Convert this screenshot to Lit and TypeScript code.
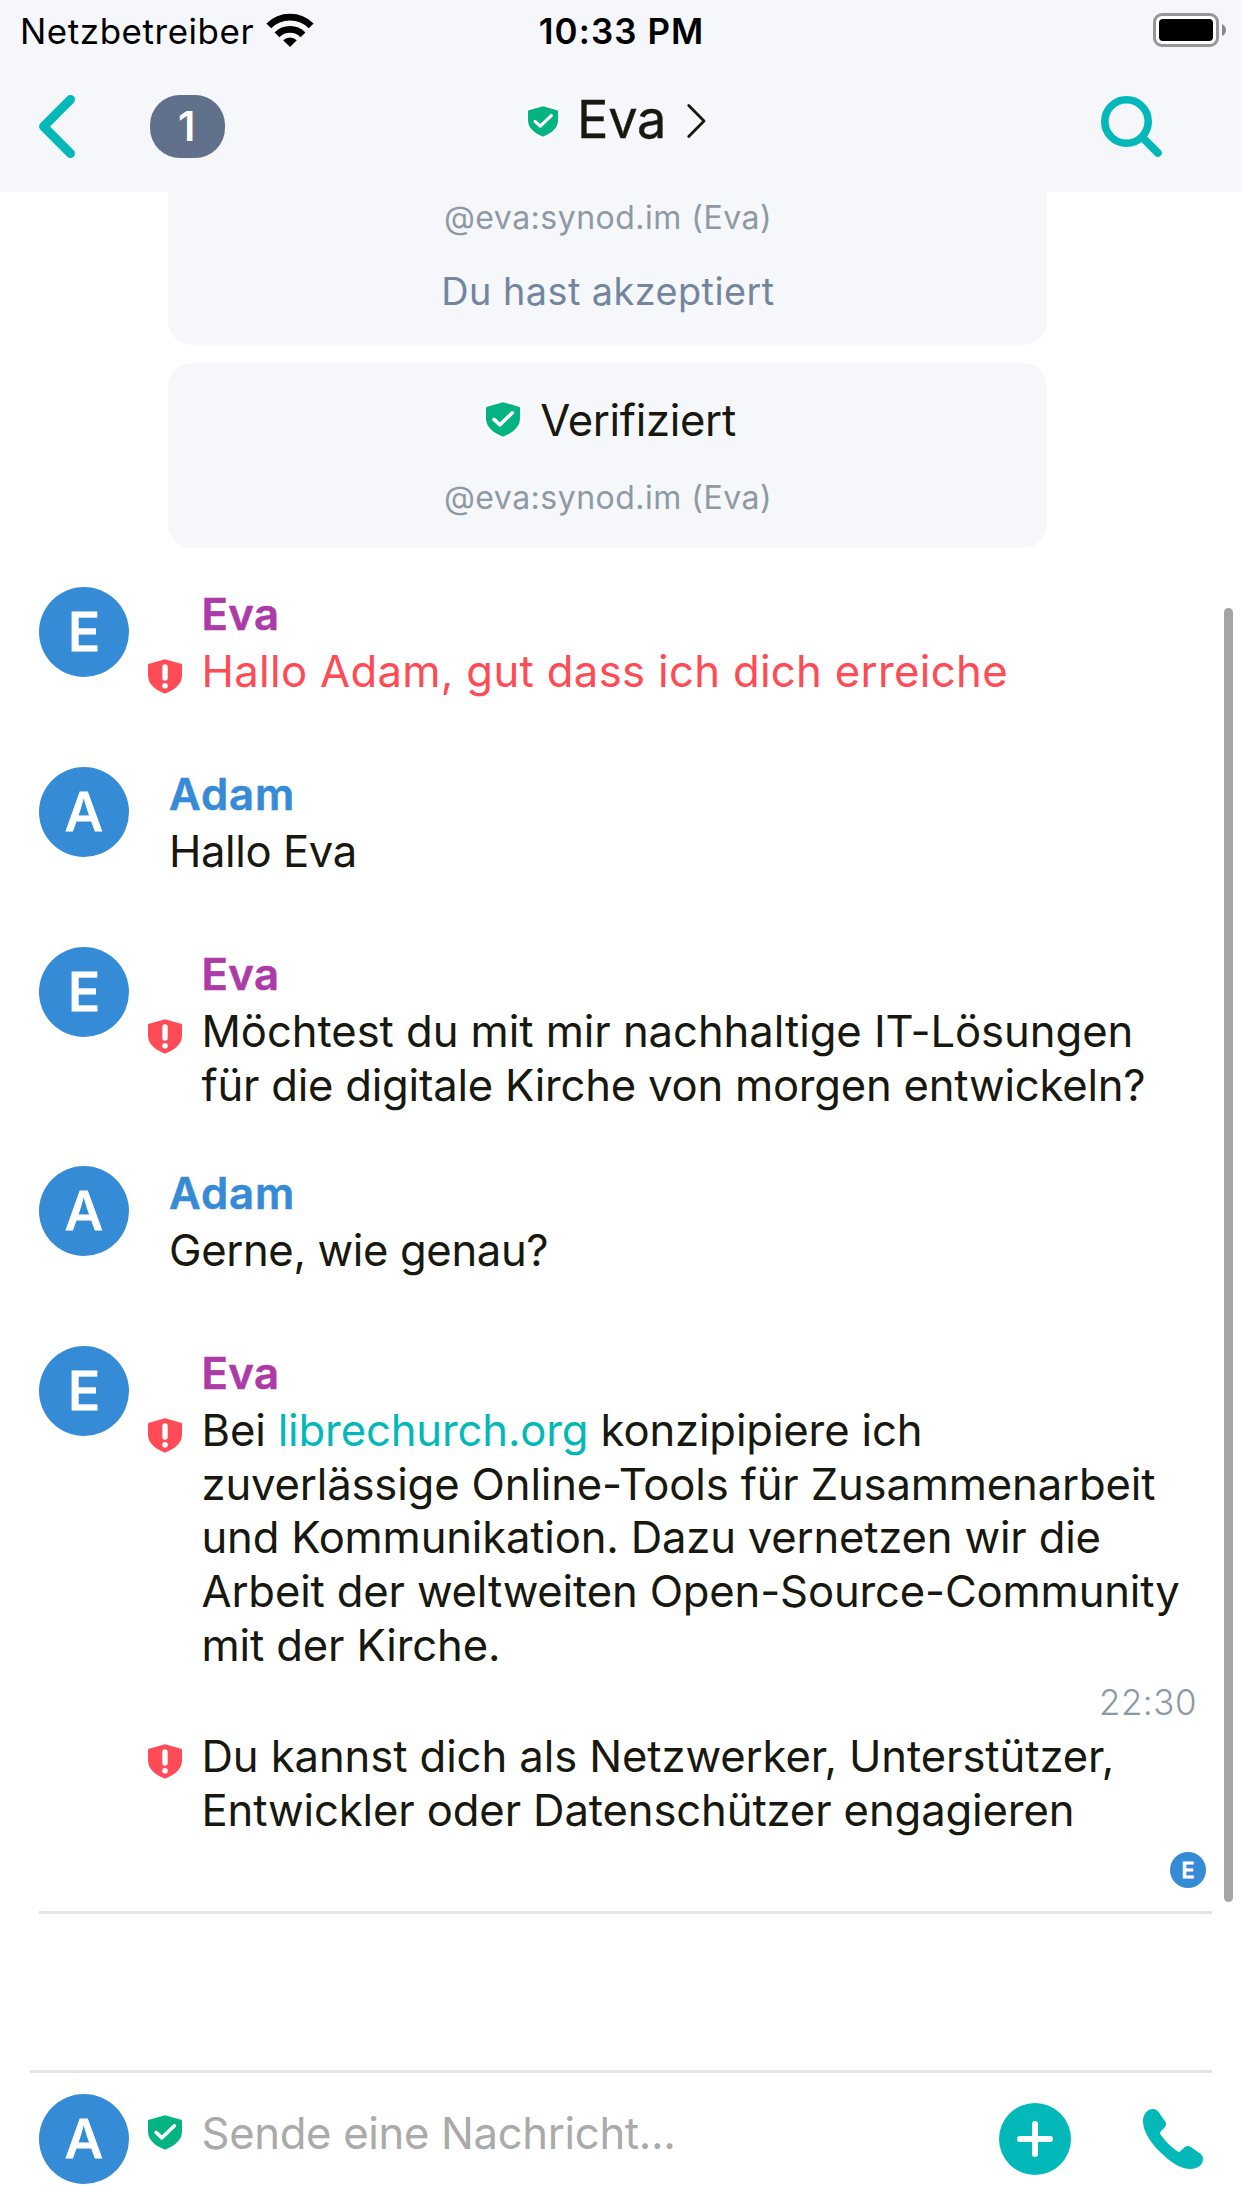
import { LitElement, html, css, svg, nothing } from "lit";
import { customElement, property } from "lit/decorators.js";

interface Line {
  text: string;
  track: number;
  link?: string;
  after?: string;
}
interface Message {
  sender: "Eva" | "Adam";
  lines: Line[];
  height: number;
  error?: boolean;
}

const messages: Message[] = [
  { sender: "Eva", height: 180, error: true, lines: [{ text: "Hallo Adam, gut dass ich dich erreiche", track: 0.35 }] },
  { sender: "Adam", height: 180, lines: [{ text: "Hallo Eva", track: -0.4 }] },
  {
    sender: "Eva",
    height: 219,
    lines: [
      { text: "Möchtest du mit mir nachhaltige IT-Lösungen", track: -0.05 },
      { text: "für die digitale Kirche von morgen entwickeln?", track: -0.22 },
    ],
  },
  { sender: "Adam", height: 180, lines: [{ text: "Gerne, wie genau?", track: -0.36 }] },
  {
    sender: "Eva",
    height: 327,
    lines: [
      { text: "Bei ", link: "librechurch.org", after: " konzipipiere ich", track: -0.14 },
      { text: "zuverlässige Online-Tools für Zusammenarbeit", track: -0.15 },
      { text: "und Kommunikation. Dazu vernetzen wir die", track: -0.18 },
      { text: "Arbeit der weltweiten Open-Source-Community", track: -0.16 },
      { text: "mit der Kirche.", track: -0.13 },
    ],
  },
];

const followUp: Line[] = [
  { text: "Du kannst dich als Netzwerker, Unterstützer,", track: -0.09 },
  { text: "Entwickler oder Datenschützer engagieren", track: -0.12 },
];

@customElement("shield-icon")
class ShieldIcon extends LitElement {
  @property() kind: "ok" | "warn" = "ok";
  static styles = css`
    :host { display: block; flex: none; width: 34px; height: 34.5px; }
    svg { display: block; width: 100%; height: 100%; overflow: visible; }
    .rim { fill: none; stroke: #fff; stroke-width: 5; stroke-linejoin: round; }
    .ok { fill: #03b381; }
    .warn { fill: #ff4b55; }
    .check { fill: none; stroke: #fff; stroke-width: 3.6; stroke-linecap: round; stroke-linejoin: round; }
    .mark { fill: #fff; }
  `;
  render() {
    const body = "M17 0.2 L33 4.7 Q34 5 34 6 V16.5 C34 25 26.5 31 18 34.2 Q17 34.6 16 34.2 C7.5 31 0 25 0 16.5 V6 Q0 5 1 4.7 Z";
    return html`<svg viewBox="0 0 34 34.5">
      <path class="rim" d=${body} />
      <path class=${this.kind} d=${body} />
      ${this.kind === "ok"
        ? svg`<path class="check" d="M8 17.4 L13.9 22.8 L26.4 10.8" />`
        : svg`<rect class="mark" x="14.3" y="5.3" width="5.4" height="16.4" rx="2.7" /><circle class="mark" cx="17" cy="26.8" r="2.8" />`}
    </svg>`;
  }
}

@customElement("user-avatar")
class UserAvatar extends LitElement {
  @property() letter = "";
  static styles = css`
    :host {
      display: flex; flex: none; align-items: center; justify-content: center;
      width: 90px; height: 90px; border-radius: 50%;
      background: #368bd6; color: #fff;
      font: 500 54px/90px Inter, sans-serif;
      -webkit-text-stroke: 0.9px #fff;
    }
  `;
  render() {
    return html`${this.letter}`;
  }
}

@customElement("app-root")
class AppRoot extends LitElement {
  static styles = css`
    :host {
      display: flex; flex-direction: column; position: relative;
      width: 1242px; height: 2208px; overflow: hidden;
      background: #fff; color: #17180f;
      font-family: Inter, "Liberation Sans", sans-serif;
      white-space: nowrap;
    }
    svg { display: block; flex: none; overflow: visible; }
    .top { flex: none; height: 192px; background: #f5f7fb; }
    .status {
      display: grid; grid-template-columns: 1fr auto 1fr; align-items: center;
      height: 60px; padding: 0 16px 0 20px; color: #000;
      font-size: 34.9px; line-height: 42px;
    }
    .carrier { display: flex; align-items: center; gap: 13px; }
    .carrier .label { letter-spacing: 0.58px; padding-top: 1px; }
    .clock { font-weight: 600; letter-spacing: 1.1px; padding-top: 1px; margin-right: 3px; }
    .battery { justify-self: end; }
    .nav { display: flex; align-items: center; height: 132px; padding: 0 0 0 38px; box-sizing: border-box; }
    .badge {
      width: 75px; height: 63px; margin-left: 75px; border-radius: 30px;
      box-sizing: border-box; padding-right: 1.5px;
      background: #61708b; color: #fff; text-align: center;
      font-weight: 600; font-size: 41px; line-height: 63px;
    }
    .title { display: flex; align-items: center; width: 573px; margin-left: 303px; padding-bottom: 10px; }
    .title shield-icon { width: 30px; height: 30.5px; }
    .title .name { font-size: 52.3px; line-height: 64px; letter-spacing: -0.28px; margin: 0 21px 5px 19px; -webkit-text-stroke: 0.4px #17180f; }
    .timeline { flex: 1; min-height: 0; overflow: hidden; }
    .card {
      display: flex; flex-direction: column; align-items: center;
      width: 879px; box-sizing: border-box; margin: 0 0 18px 168px;
      padding: 31px 0 0 1px; border-radius: 24px; background: #f5f7fb;
    }
    .card.cut { height: 153px; padding-top: 6px; border-radius: 0 0 24px 24px; }
    .card.done { height: 185px; margin-bottom: 39px; }
    .user { font-size: 32px; line-height: 40px; letter-spacing: 0.488px; color: #8e99a4; }
    .accepted { margin-top: 30px; font-size: 37.8px; line-height: 46px; letter-spacing: 0.464px; color: #73859f; }
    .verified { display: flex; align-items: center; gap: 20px; padding-left: 6px; margin-bottom: 30px; font-size: 43.6px; line-height: 54px; letter-spacing: -0.3px; }
    .verified shield-icon { margin-bottom: 3px; }
    .msg { display: flex; padding-left: 39px; }
    .body { padding-top: 1px; }
    .eva .e2e { margin: 71.6px 19.5px 0 19px; }
    .adam .body { margin-left: 40px; }
    .sender { font-weight: 600; font-size: 43.6px; line-height: 54px; margin-bottom: 3px; }
    .eva .sender { color: #ac3ba8; letter-spacing: 0.44px; -webkit-text-stroke: 0.6px #ac3ba8; }
    .adam .sender { color: #368bd6; letter-spacing: 0.9px; -webkit-text-stroke: 0.6px #368bd6; }
    .line { font-size: 43.6px; line-height: 53.7px; }
    .error { color: #ff4b55; }
    .link { color: #03b8b9; }
    .time { height: 42px; margin: 8px 45px 7px 0; text-align: right; font-weight: 300; font-size: 34.9px; line-height: 42px; letter-spacing: 0.54px; color: #8e99a4; }
    .follow { display: flex; padding-left: 148px; }
    .follow .e2e { margin: 13.6px 19.5px 0 0; }
    .receipt { display: flex; justify-content: flex-end; padding: 15px 36px 23px 0; }
    .receipt user-avatar { width: 36px; height: 36px; font-size: 21.5px; line-height: 36px; }
    .rule { height: 3px; margin: 0 30px 0 39px; background: #dfe4ef; }
    .composer { flex: none; display: flex; height: 138px; margin: 0 30px; border-top: 3px solid #dfe4ef; box-sizing: border-box; padding: 21px 9px 0 9px; }
    .composer shield-icon { margin: 20.6px 19.5px 0 19px; }
    .placeholder { flex: 1; font-size: 43.6px; line-height: 54px; letter-spacing: -0.31px; color: #aaa; padding-top: 13px; }
    .plus { margin: 9px 72px 0 0; }
    .phone { margin-top: 15px; }
    .scroll { position: absolute; left: 1224px; top: 608px; width: 9px; height: 1294px; border-radius: 4.5px; background: #a5a5a5; }
  `;

  private line(l: Line) {
    return html`<div class="line" style="letter-spacing:${l.track}px">${l.text}${l.link ? html`<span class="link">${l.link}</span>` : nothing}${l.after ?? nothing}</div>`;
  }

  private message(m: Message) {
    const eva = m.sender === "Eva";
    return html`<div class="msg ${eva ? "eva" : "adam"}" style="height:${m.height}px">
      <user-avatar letter=${m.sender[0]}></user-avatar>${eva ? html`<shield-icon class="e2e" kind="warn"></shield-icon>` : nothing}
      <div class="body ${m.error ? "error" : ""}"><div class="sender">${m.sender}</div>${m.lines.map((l) => this.line(l))}</div>
    </div>`;
  }

  render() {
    return html`<header class="top">
        <div class="status">
          <div class="carrier"><span class="label">Netzbetreiber</span><svg width="46" height="33" viewBox="0 0 46 33">
              <g fill="none" stroke="#000" stroke-width="6.8">
                <path d="M1.8 11.8 A30 30 0 0 1 44.2 11.8" />
                <path d="M10 20.8 A18.4 18.4 0 0 1 36 20.8" />
              </g>
              <path d="M23 33 L16.2 26.2 A9.8 9.8 0 0 1 29.8 26.2 Z" />
            </svg></div>
          <div class="clock">10:33 PM</div>
          <svg class="battery" width="73" height="34" viewBox="0 0 73 34">
            <rect x="1.5" y="1.5" width="63" height="31" rx="7.5" fill="#fff" stroke="#969698" stroke-width="3" />
            <rect x="6" y="6" width="54" height="22" rx="4" />
            <path d="M69 11 Q73 13 73 17 Q73 21 69 23 Z" fill="#88888a" />
          </svg>
        </div>
        <div class="nav">
          <svg width="37" height="63" viewBox="0 0 37 63"><path d="M32.5 4.5 L5.6 31.5 L32.5 58.5" fill="none" stroke="#03b8b9" stroke-width="9" stroke-linecap="round" stroke-linejoin="round" /></svg>
          <div class="badge">1</div>
          <div class="title">
            <shield-icon></shield-icon><span class="name">Eva</span><svg width="19" height="34" viewBox="0 0 19 34"><path d="M1.7 1.5 L17 17 L1.7 32.5" fill="none" stroke="#17180f" stroke-width="2.8" stroke-linecap="round" stroke-linejoin="round" /></svg>
          </div>
          <svg width="61" height="61" viewBox="0 0 61 61"><g fill="none" stroke="#03b8b9"><circle cx="25.5" cy="25.5" r="21.7" stroke-width="7.6" /><path d="M42 42 L56.8 56.8" stroke-width="8" stroke-linecap="round" /></g></svg>
        </div>
      </header>
      <main class="timeline">
        <div class="card cut"><div class="user">@eva:synod.im (Eva)</div><div class="accepted">Du hast akzeptiert</div></div>
        <div class="card done"><div class="verified"><shield-icon></shield-icon><span>Verifiziert</span></div><div class="user">@eva:synod.im (Eva)</div></div>
        ${messages.map((m) => this.message(m))}
        <div class="time">22:30</div>
        <div class="follow"><shield-icon class="e2e" kind="warn"></shield-icon><div>${followUp.map((l) => this.line(l))}</div></div>
        <div class="receipt"><user-avatar letter="E"></user-avatar></div>
        <div class="rule"></div>
      </main>
      <footer class="composer">
        <user-avatar letter="A"></user-avatar><shield-icon></shield-icon><div class="placeholder">Sende eine Nachricht...</div>
        <svg class="plus" width="72" height="72" viewBox="0 0 72 72"><circle cx="36" cy="36" r="36" fill="#03b8b9" /><path d="M36 21 V51 M21 36 H51" stroke="#fff" stroke-width="6" stroke-linecap="round" /></svg>
        <svg class="phone" width="60" height="60" viewBox="0 0 60 60"><path fill="#03b8b9" d="M0 12 C0 5 4.5 0 9.7 0 C12 0 13.8 0.7 15.2 2.6 L22 12.3 C23.4 14.4 23.4 16.6 21.6 18.6 L17.6 22.6 C16.8 23.5 16.8 24.5 17.5 25.5 C22 32 27.5 37.7 34.2 42.2 C35.4 43 36.5 43 37.4 42.2 L41.3 38.4 C43.3 36.6 45.6 36.5 47.8 38 L57 44.6 C59.2 46.2 60 47.9 60 50.2 C60 55.6 54.6 60 47.5 60 C38.5 60 29 54.5 17.5 43.5 C6.5 32.5 0 21.5 0 12 Z" /></svg>
      </footer>
      <div class="scroll"></div>`;
  }
}
